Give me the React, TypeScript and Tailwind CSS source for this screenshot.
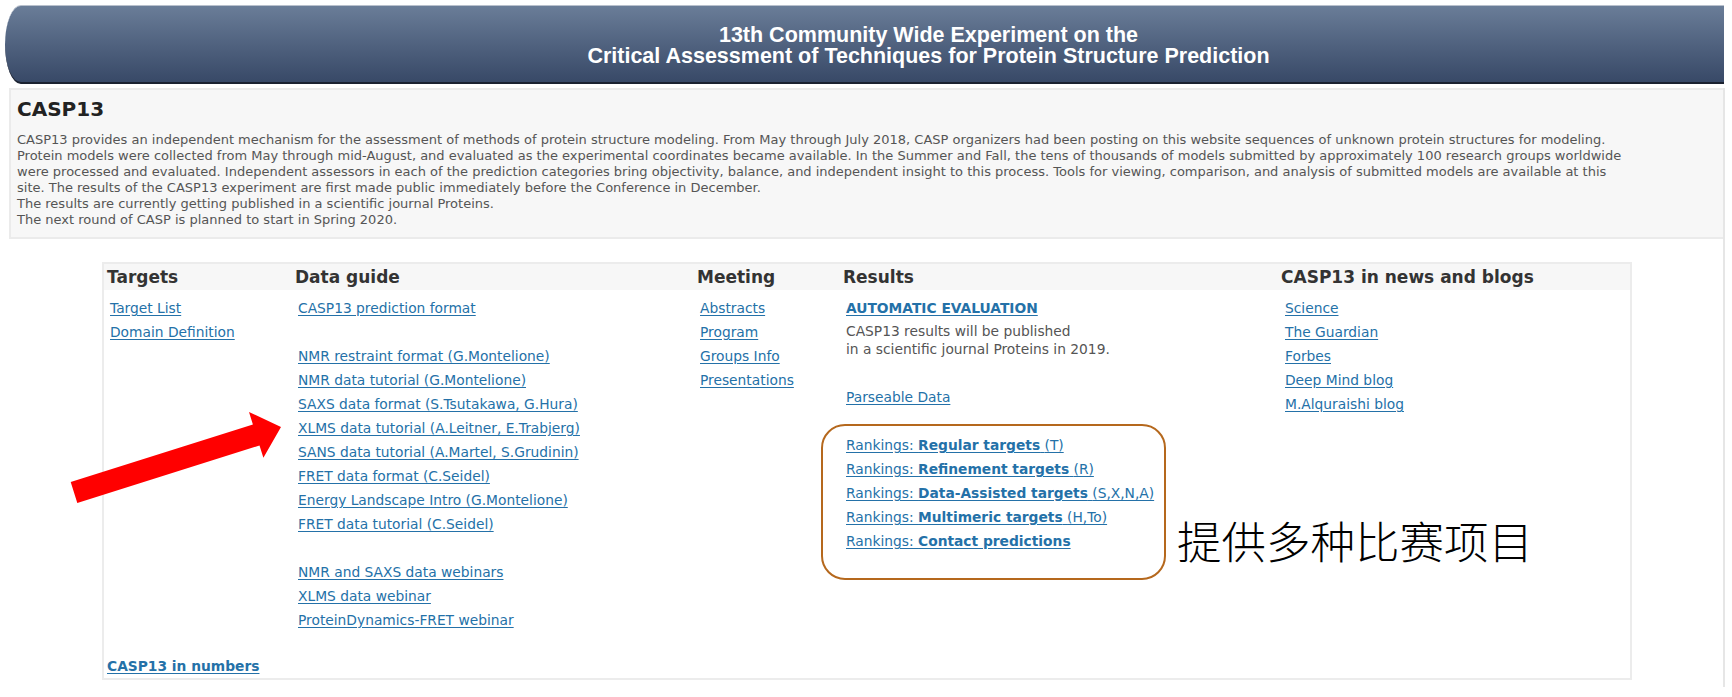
import React from 'react';

const linkCls = 'text-[#2471a8] underline underline-offset-[2px]';

const dataGuide: string[] = [
  'CASP13 prediction format',
  '',
  'NMR restraint format (G.Montelione)',
  'NMR data tutorial (G.Montelione)',
  'SAXS data format (S.Tsutakawa, G.Hura)',
  'XLMS data tutorial (A.Leitner, E.Trabjerg)',
  'SANS data tutorial (A.Martel, S.Grudinin)',
  'FRET data format (C.Seidel)',
  'Energy Landscape Intro (G.Montelione)',
  'FRET data tutorial (C.Seidel)',
  '',
  'NMR and SAXS data webinars',
  'XLMS data webinar',
  'ProteinDynamics-FRET webinar',
];

const rankings: [string, string][] = [
  ['Regular targets', '(T)'],
  ['Refinement targets', '(R)'],
  ['Data-Assisted targets', '(S,X,N,A)'],
  ['Multimeric targets', '(H,To)'],
  ['Contact predictions', ''],
];

const LinkList = ({ items, indent = 'pl-[6px]' }: { items: string[]; indent?: string }) => (
  <div className={indent}>
    {items.map((t, i) => (
      <div key={i} className="h-[24px] leading-[24px] whitespace-nowrap">
        {t && <a className={linkCls}>{t}</a>}
      </div>
    ))}
  </div>
);

export default function App() {
  return (
    <div className="relative w-[1732px] h-[697px] overflow-hidden bg-white font-['DejaVu_Sans',sans-serif]">
      {/* banner */}
      <div className="ml-[5px] mt-[5px] w-[1719px] h-[79px] rounded-tl-[16px_40px] rounded-bl-[16px_40px] border-t border-t-[#b9c1cd] border-b-2 border-b-[#1b2230] bg-linear-to-b from-[#6a7d98] to-[#384967] flex flex-col items-center justify-center pl-[128px] pt-[4px] text-white font-bold text-[21.5px] leading-[21px] font-['Liberation_Sans',sans-serif]">
        <div>13th Community Wide Experiment on the</div>
        <div>Critical Assessment of Techniques for Protein Structure Prediction</div>
      </div>

      <div className="ml-[9px] mt-[4px] w-[1716px] h-[599px] border-r-2 border-r-[#e6e6e6]">
        {/* intro */}
        <div className="h-[151px] bg-[#f7f7f7] border-2 border-r-0 border-[#ebebeb] px-[6px] pt-[7px]">
          <div className="text-[20px] leading-[24px] font-bold text-[#222]">CASP13</div>
          <div className="mt-[11px] text-[13px] leading-[16px] text-[#555] whitespace-nowrap">
            CASP13 provides an independent mechanism for the assessment of methods of protein structure modeling. From May through July 2018, CASP organizers had been posting on this website sequences of unknown protein structures for modeling.
            <br />
            Protein models were collected from May through mid-August, and evaluated as the experimental coordinates became available. In the Summer and Fall, the tens of thousands of models submitted by approximately 100 research groups worldwide
            <br />
            were processed and evaluated. Independent assessors in each of the prediction categories bring objectivity, balance, and independent insight to this process. Tools for viewing, comparison, and analysis of submitted models are available at this
            <br />
            site. The results of the CASP13 experiment are first made public immediately before the Conference in December.
            <br />
            The results are currently getting published in a scientific journal Proteins.
            <br />
            The next round of CASP is planned to start in Spring 2020.
          </div>
        </div>

        {/* links panel */}
        <div className="ml-[93px] mt-[23px] w-[1530px] border-2 border-[#ececec]">
          <div className="grid grid-cols-[188px_402px_146px_438px_1fr] h-[26px] bg-[#f7f7f7] text-[17px] leading-[26px] font-bold text-[#333]">
            <div className="pl-[3px]">Targets</div>
            <div className="pl-[3px]">Data guide</div>
            <div className="pl-[3px]">Meeting</div>
            <div className="pl-[3px]">Results</div>
            <div className="pl-[3px]">CASP13 in news and blogs</div>
          </div>

          <div className="grid grid-cols-[188px_402px_146px_438px_1fr] pt-[6px] text-[13.8px]">
            <LinkList items={['Target List', 'Domain Definition']} />
            <LinkList items={dataGuide} />
            <LinkList items={['Abstracts', 'Program', 'Groups Info', 'Presentations']} />
            <div className="pl-[6px]">
              <div className="h-[24px] leading-[24px]">
                <a className={`${linkCls} font-bold`}>AUTOMATIC EVALUATION</a>
              </div>
              <div className="mt-[2px] leading-[18px] text-[#555]">
                CASP13 results will be published
                <br />
                in a scientific journal Proteins in 2019.
              </div>
              <div className="mt-[27px] h-[24px] leading-[24px]">
                <a className={linkCls}>Parseable Data</a>
              </div>
              <div className="mt-[24px]">
                {rankings.map(([name, code]) => (
                  <div key={name} className="h-[24px] leading-[24px] whitespace-nowrap">
                    <a className={linkCls}>
                      Rankings: <b>{name}</b> {code}
                    </a>
                  </div>
                ))}
              </div>
            </div>
            <LinkList items={['Science', 'The Guardian', 'Forbes', 'Deep Mind blog', 'M.Alquraishi blog']} indent="pl-[7px]" />
          </div>

          <div className="mt-[22px] h-[24px] leading-[24px] pl-[3px] text-[13.8px]">
            <a className={`${linkCls} font-bold`}>CASP13 in numbers</a>
          </div>
        </div>
      </div>

      {/* annotations */}
      <div className="absolute left-[821px] top-[424px] w-[345px] h-[156px] rounded-[24px] border-2 border-[#b5681d]" />
      <div className="absolute left-[1177px] top-[518px] text-[44.5px] leading-[44px] text-black font-light font-['Noto_Sans_CJK_SC',sans-serif] whitespace-nowrap">
        提供多种比赛项目
      </div>
      <svg className="absolute left-0 top-0 pointer-events-none" width="1732" height="697">
        <polygon
          points="70.7,482 252.9,424.4 249,412 281,427 263.4,457.8 259.5,445.4 77.3,503"
          fill="#ff0000"
        />
      </svg>
    </div>
  );
}
